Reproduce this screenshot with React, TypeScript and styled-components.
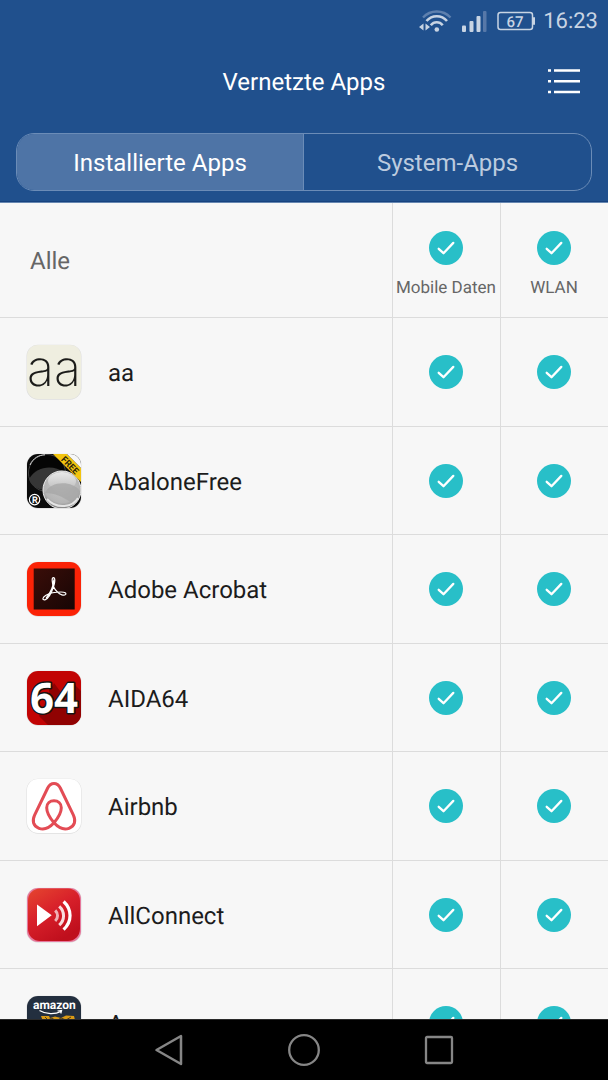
import React, { useState } from "react";
import styled, { createGlobalStyle } from "styled-components";

const GlobalStyle = createGlobalStyle`
  *, *::before, *::after { box-sizing: border-box; }
  body {
    margin: 0;
    background: #000;
    font-family: Roboto, "Liberation Sans", sans-serif;
    text-rendering: geometricPrecision;
  }
  button { font: inherit; color: inherit; background: none; border: 0; padding: 0; cursor: pointer; }
`;

const Screen = styled.div`
  display: flex;
  flex-direction: column;
  height: 100vh;
  background: #f7f7f7;
`;

const Header = styled.header`
  flex: none;
  background: #20508d;
  border-bottom: 1px solid #6687b1;
  box-shadow: inset 0 -1px 0 #17427f;
  color: #fff;
`;

const StatusBar = styled.div`
  display: flex;
  align-items: center;
  justify-content: flex-end;
  gap: 8px;
  height: 42px;
  padding-right: 10px;
  color: #c8d4e3;
`;

const StatusIcon = styled.svg`
  display: block;
  flex: none;
`;

const Clock = styled.time`
  padding-top: 2px;
  font-size: 22px;
  line-height: 32px;
`;

const TitleBar = styled.div`
  display: grid;
  grid-template-columns: 64px 1fr 64px;
  align-items: center;
  height: 80px;
  padding: 0 12px;
`;

const Title = styled.h1`
  grid-column: 2;
  margin: 0;
  font-size: 24px;
  font-weight: 400;
  line-height: 32px;
  text-align: center;
`;

const MenuButton = styled.button`
  display: grid;
  place-items: center;
  height: 48px;
`;

const Tabs = styled.div`
  display: grid;
  grid-template-columns: 1fr 1fr;
  height: 58px;
  margin: 11px 16px;
  border: 1px solid #6b8cb7;
  border-radius: 18px;
  overflow: hidden;
`;

const Tab = styled.button<{ $active: boolean }>`
  padding-top: 2px;
  font-size: 24px;
  line-height: 32px;
  color: ${(p) => (p.$active ? "#fff" : "#bccbdf")};
  background: ${(p) => (p.$active ? "#4e74a6" : "transparent")};
  &:first-child { border-right: 1px solid #6b8cb7; }
`;

const List = styled.main`
  flex: 1;
  min-height: 0;
  overflow: hidden;
`;

const AppTable = styled.table`
  width: 100%;
  table-layout: fixed;
  border-collapse: separate;
  border-spacing: 0;
`;

const SwitchCol = styled.col`
  width: 108px;
`;

const HeadRow = styled.tr`
  height: 115px;
`;

const AppRow = styled.tr`
  height: 109px;
  &:nth-child(even) { height: 108px; }
`;

const headCell = `
  padding: 0;
  border-bottom: 1px solid #dcdcdc;
  font-weight: 400;
  color: #666;
`;

const AllCell = styled.th`
  ${headCell}
  padding: 2px 0 0 30px;
  text-align: left;
  font-size: 24px;
`;

const HeadCell = styled.th`
  ${headCell}
  padding-right: 1px;
  border-left: 1px solid #dcdcdc;
  vertical-align: top;
`;

const HeadLabel = styled.label`
  display: flex;
  flex-direction: column;
  align-items: center;
  gap: 11px;
  padding-top: 28px;
  font-size: 17px;
  line-height: 24px;
  white-space: nowrap;
`;

const NameCell = styled.th`
  padding: 0 0 0 26px;
  border-bottom: 1px solid #dcdcdc;
  font-weight: 400;
  text-align: left;
  color: #1c1c1c;
`;

const CheckCell = styled.td`
  padding: 0 1px 0 0;
  border-bottom: 1px solid #dcdcdc;
  border-left: 1px solid #dcdcdc;
`;

const AppLabel = styled.div`
  display: flex;
  align-items: center;
  gap: 26px;
`;

const AppName = styled.span`
  padding-top: 2px;
  font-size: 24px;
  line-height: 32px;
`;

const IconSvg = styled.svg`
  display: block;
  flex: none;
  width: 56px;
  height: 56px;
  overflow: visible;
`;

const CheckBox = styled.span`
  display: grid;
  width: 34px;
  height: 34px;
  margin: 0 auto;
  & > * { grid-area: 1 / 1; }
  svg { pointer-events: none; }
`;

const CheckInput = styled.input`
  appearance: none;
  width: 34px;
  height: 34px;
  margin: 0;
  border: 2px solid #b5b5b5;
  border-radius: 50%;
  cursor: pointer;
  &:checked { background: #28bfc8; border: 0; }
  &:not(:checked) + svg { visibility: hidden; }
`;

const NavBar = styled.nav`
  flex: none;
  display: flex;
  justify-content: center;
  gap: 75px;
  height: 61px;
  border-top: 1px solid #2a2a2a;
  background: #000;
`;

const NavButton = styled.button`
  display: grid;
  place-items: center;
  width: 60px;
`;

function Check({ label, checked, onChange }: { label?: string; checked: boolean; onChange: () => void }) {
  return (
    <CheckBox>
      <CheckInput type="checkbox" aria-label={label} checked={checked} onChange={onChange} />
      <svg width="34" height="34" viewBox="0 0 34 34" fill="none" aria-hidden="true">
        <path d="M9.7 17.8 14.5 22.2 24.3 11.9" stroke="#fff" strokeWidth="2.3" strokeLinecap="round" strokeLinejoin="round" />
      </svg>
    </CheckBox>
  );
}

function AppIcon({ id }: { id: string }) {
  return (
    <IconSvg viewBox="-1 -1 56 56" aria-hidden="true">
      <defs>
        <clipPath id={`clip-${id}`}>
          <rect width="54" height="54" rx="11" />
        </clipPath>
      </defs>
      <rect x="-.5" y="-.3" width="55" height="55" rx="11.5" fill="#000" opacity=".1" />
      <g clipPath={`url(#clip-${id})`}>{artwork[id]}</g>
      {lettering[id]}
    </IconSvg>
  );
}

const artwork: Record<string, React.ReactNode> = {
  aa: <rect width="54" height="54" fill="#efeee0" />,
  abalone: (
    <>
      <defs>
        <radialGradient id="pearl" cx=".5" cy=".35" r=".65">
          <stop offset="0" stopColor="#c9c9c9" />
          <stop offset=".75" stopColor="#b4b4b4" />
          <stop offset="1" stopColor="#7d7d7d" />
        </radialGradient>
        <linearGradient id="shade" x1="0" y1="0" x2="0" y2="1">
          <stop offset="0" stopColor="#e9e9e9" />
          <stop offset="1" stopColor="#bdbdbd" />
        </linearGradient>
      </defs>
      <rect width="54" height="54" fill="#0b0b0b" />
      <circle cx="20" cy="19" r="18.5" fill="#050505" stroke="#444" strokeWidth="1" />
      <path d="M3 11C6 4 12 1 18 .8" fill="none" stroke="#ddd" strokeWidth="1" />
      <path d="M2 25C10 11 27 11 37 18 34 30 27 36 19 36 10 36 4 32 2 25Z" fill="#363636" />
      <circle cx="35" cy="36" r="19" fill="url(#pearl)" stroke="#f1f1f1" strokeWidth="1" />
      <ellipse cx="35" cy="27" rx="14" ry="9" fill="url(#shade)" />
      <path d="M18 39C23 27 45 26 53 37 52 43 50 47 46 50 36 42 26 39 18 39Z" fill="#a6a6a6" opacity=".75" />
      <path d="M20 45C30 56 46 53 51 44" fill="none" stroke="#e4e4e4" strokeWidth="2" />
      <path d="M26 0H40L54 14V28Z" fill="#f2c40f" />
      <path d="M40 0H54V14Z" fill="#f7f7f7" />
      <circle cx="7.6" cy="45.6" r="5.2" fill="#111" stroke="#fff" strokeWidth="1.2" />
    </>
  ),
  acrobat: (
    <>
      <defs>
        <linearGradient id="acro" x1="0" y1="0" x2="1" y2="1">
          <stop offset="0" stopColor="#3a0d08" />
          <stop offset="1" stopColor="#170605" />
        </linearGradient>
      </defs>
      <rect width="54" height="54" fill="#fb2307" />
      <rect x="6.7" y="6.5" width="41" height="41" fill="url(#acro)" />
      <g fill="none" stroke="#fff" strokeLinecap="round" strokeLinejoin="round">
        <path d="M26.6 24.8C25 20.5 24.5 15.7 26.4 15.6 28.5 15.6 28 20.5 26.6 24.5 24.6 30.5 21 37 18 37.8 15 38.3 15.2 35.3 19 33.2 23 31 29.5 30 34 30 38.2 30 39.5 31.2 38.6 32.4 37 34.2 33 32.6 30.4 30 28.4 28.2 27.3 26.6 26.6 24.8Z" strokeWidth="1.2" />
        <path d="M27 18C27.2 23 23.5 31 19.5 36" strokeWidth="1.6" />
      </g>
    </>
  ),
  aida: (
    <>
      <rect width="54" height="54" fill="#c20404" />
      <path d="M27 12 12 45 21 54H54V20L46 12 36 24Z" fill="#900202" />
      <path d="M22 12 34 24 27 36 22 20Z" fill="#900202" />
    </>
  ),
  airbnb: (
    <>
      <rect width="54" height="54" fill="#fff" />
      <path
        d="M27 43.8C22 49.3 17 51.2 12 49.3 6.2 47 4.9 42 7.6 36.2L20.7 9C23.8 3 30.2 3 33.3 9L46.4 36.2C49.1 42 47.8 47 42 49.3 37 51.2 32 49.3 27 43.8 22 38 19.7 33 19.7 28.8 19.7 24.5 23 21.8 27 21.8S34.3 24.5 34.3 28.8C34.3 33 32 38 27 43.8Z"
        fill="none" stroke="#e34c55" strokeWidth="3" strokeLinejoin="round"
      />
    </>
  ),
  allconnect: (
    <>
      <defs>
        <linearGradient id="cast" x1="0" y1="0" x2=".6" y2="1">
          <stop offset="0" stopColor="#e5462f" />
          <stop offset=".5" stopColor="#d8202a" />
          <stop offset="1" stopColor="#bf0f1d" />
        </linearGradient>
      </defs>
      <rect width="54" height="54" fill="#e6789c" />
      <rect x="1" y=".6" width="52" height="52.4" rx="12" fill="url(#cast)" />
      <path d="M10 16.5V38.3L24.7 27.3Z" fill="#fff" />
      <g fill="none" stroke="#fff">
        <path d="M28.2 22.4C31.3 25.5 31.3 30 28.2 33" strokeWidth="3" opacity=".65" />
        <path d="M32.2 18.3C38 23.5 38 32 32.2 37.2" strokeWidth="3" opacity=".85" />
        <path d="M36.6 13.5C45.2 21.5 45.2 33.5 36.6 41.6" strokeWidth="3.2" />
      </g>
    </>
  ),
  amazon: (
    <>
      <rect width="54" height="54" fill="#232f3f" />
      <path d="M12.5 14.5C19 18.5 28 18.5 34 15.5M30.5 15 34.6 14.4 33.8 17.5" fill="none" stroke="#fff" strokeWidth="1.2" />
      <path d="M14 20H22L23 22 28 20.5 34 22 39 19.5 47 20 48 24 42 42H22Z" fill="#d99a16" />
      <path d="M18 21 21 24 25 22 29 25 34 22 39 24 44 21" fill="none" stroke="#4a3a1c" strokeWidth="1" />
    </>
  ),
};

const lettering: Record<string, React.ReactNode> = {
  aa: (
    <text x="27" y="41" textAnchor="middle" fontFamily="Inter, Roboto, sans-serif" fontWeight="200" fontSize="50" fill="#1c1c1a">aa</text>
  ),
  abalone: (
    <g fontFamily="Roboto, sans-serif" fontWeight="700" fontSize="9" textAnchor="middle">
      <text transform="translate(43.2 11) rotate(45)" x="0" y="3.4" fill="#29220a">FREE</text>
      <text x="7.8" y="48.9" fill="#fff">R</text>
    </g>
  ),
  aida: (
    <text x="27" y="42" textAnchor="middle" fontFamily="'Open Sans', sans-serif" fontWeight="700" fontSize="42" fill="#fff" stroke="#151515" strokeWidth="3" strokeLinejoin="round" paintOrder="stroke">64</text>
  ),
  amazon: (
    <text x="27.4" y="13" textAnchor="middle" fontFamily="Roboto, sans-serif" fontWeight="700" fontSize="12" fill="#fff">amazon</text>
  ),
};

const apps = [
  { id: "aa", name: "aa" },
  { id: "abalone", name: "AbaloneFree" },
  { id: "acrobat", name: "Adobe Acrobat" },
  { id: "aida", name: "AIDA64" },
  { id: "airbnb", name: "Airbnb" },
  { id: "allconnect", name: "AllConnect" },
  { id: "amazon", name: "Amazon" },
];

const tabs = ["Installierte Apps", "System-Apps"];
const networks = ["Mobile Daten", "WLAN"];

export default function App() {
  const [tab, setTab] = useState(0);
  const [blocked, setBlocked] = useState<Record<string, boolean>>({});

  const allOn = (n: string) => apps.every((a) => !blocked[a.id + n]);
  const toggle = (id: string, n: string) => setBlocked((b) => ({ ...b, [id + n]: !b[id + n] }));
  const toggleAll = (n: string) => {
    const next = allOn(n);
    setBlocked((b) => ({ ...b, ...Object.fromEntries(apps.map((a) => [a.id + n, next])) }));
  };

  return (
    <Screen>
      <GlobalStyle />
      <Header>
        <StatusBar>
          <StatusIcon width="34" height="24" viewBox="0 0 34 24" fill="none" aria-hidden="true">
            <path d="M4 8.5C11.5 .5 24 .5 31.5 8.5" stroke="#5e80ae" strokeWidth="2.4" />
            <path d="M7.5 12C13 5.7 22.5 5.7 28 12" stroke="currentColor" strokeWidth="2.6" />
            <path d="M11.8 16.2C15 12.3 20.5 12.3 23.7 16.2" stroke="currentColor" strokeWidth="2.6" />
            <circle cx="17.8" cy="20.5" r="2.3" fill="currentColor" />
            <path d="M4.5 14.5V21.5L0 18ZM6.5 14.5V21.5L11 18Z" fill="currentColor" />
          </StatusIcon>
          <StatusIcon width="28" height="24" viewBox="0 0 28 24" fill="currentColor" aria-hidden="true">
            <rect x="1" y="16.5" width="4" height="6.5" rx="1" />
            <rect x="8.5" y="12" width="4" height="11" rx="1" />
            <rect x="15.500" y="7" width="4" height="16" rx="1" />
            <rect x="22" y="2" width="3.5" height="21" rx="1" fill="#5778a8" />
          </StatusIcon>
          <StatusIcon width="38" height="20" viewBox="0 0 38 20" role="img" aria-label="Akku 67 %">
            <rect x="1" y="1.5" width="34.5" height="17" rx="2.5" fill="none" stroke="currentColor" strokeWidth="1.5" />
            <rect x="36" y="6" width="2" height="8" rx="1" fill="currentColor" />
            <text x="18" y="15.5" textAnchor="middle" fontFamily="Roboto, sans-serif" fontWeight="500" fontSize="15" fill="currentColor">67</text>
          </StatusIcon>
          <Clock>16:23</Clock>
        </StatusBar>
        <TitleBar>
          <Title>Vernetzte Apps</Title>
          <MenuButton type="button" aria-label="Menü">
            <svg width="34" height="26" viewBox="0 0 34 26" fill="none" stroke="#fff" strokeWidth="2.6" aria-hidden="true">
              <path d="M1 1.5H4M1 12.2H4M1 23H4M7 1.5H33M7 12.2H33M7 23H33" />
            </svg>
          </MenuButton>
        </TitleBar>
        <Tabs role="tablist">
          {tabs.map((t, i) => (
            <Tab key={t} type="button" role="tab" aria-selected={tab === i} $active={tab === i} onClick={() => setTab(i)}>
              {t}
            </Tab>
          ))}
        </Tabs>
      </Header>
      <List>
        <AppTable>
          <colgroup>
            <col />
            <SwitchCol />
            <SwitchCol />
          </colgroup>
          <thead>
            <HeadRow>
              <AllCell scope="col">Alle</AllCell>
              {networks.map((n) => (
                <HeadCell key={n} scope="col">
                  <HeadLabel>
                    <Check checked={allOn(n)} onChange={() => toggleAll(n)} />
                    {n}
                  </HeadLabel>
                </HeadCell>
              ))}
            </HeadRow>
          </thead>
          <tbody>
            {apps.map((a) => (
              <AppRow key={a.id}>
                <NameCell scope="row">
                  <AppLabel>
                    <AppIcon id={a.id} />
                    <AppName>{a.name}</AppName>
                  </AppLabel>
                </NameCell>
                {networks.map((n) => (
                  <CheckCell key={n}>
                    <Check label={`${a.name}: ${n}`} checked={!blocked[a.id + n]} onChange={() => toggle(a.id, n)} />
                  </CheckCell>
                ))}
              </AppRow>
            ))}
          </tbody>
        </AppTable>
      </List>
      <NavBar aria-label="Navigation">
        <NavButton type="button" aria-label="Zurück">
          <svg width="30" height="34" viewBox="0 0 30 34" fill="none" stroke="#868686" strokeWidth="2.5" strokeLinejoin="round" aria-hidden="true">
            <path d="M27 3V31L2.5 17Z" />
          </svg>
        </NavButton>
        <NavButton type="button" aria-label="Startbildschirm">
          <svg width="34" height="34" viewBox="0 0 34 34" fill="none" stroke="#868686" strokeWidth="2.3" aria-hidden="true">
            <circle cx="17" cy="17" r="14.8" />
          </svg>
        </NavButton>
        <NavButton type="button" aria-label="Letzte Apps">
          <svg width="30" height="30" viewBox="0 0 30 30" fill="none" stroke="#868686" strokeWidth="2.3" aria-hidden="true">
            <rect x="2" y="2" width="26" height="26" rx="1" />
          </svg>
        </NavButton>
      </NavBar>
    </Screen>
  );
}
